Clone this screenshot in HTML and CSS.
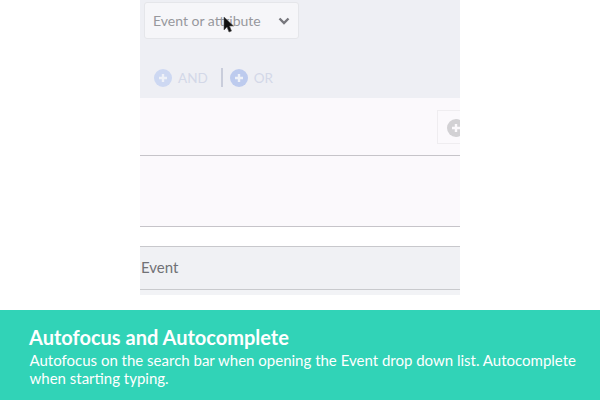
FILE: index.html
```html
<!DOCTYPE html>
<html lang="en">
<head>
    <meta charset="UTF-8">
    <meta name="viewport" content="width=device-width, initial-scale=1.0">
    <title>Autofocus and Autocomplete</title>
    <link rel="stylesheet" href="styles.css">
</head>
<body>
    <div class="stage">
        <div class="builder">
            <div class="filter-panel">
                <div class="select">
                    <span class="select-text">Event or attribute</span>
                    <svg class="chevron" width="12" height="8" viewBox="0 0 12 8"><path d="M1.500 1.500 L6 6 L10.500 1.500" fill="none" stroke="#77777d" stroke-width="2.400"/></svg>
                </div>
                <div class="logic-row">
                    <span class="logic-btn">
                        <svg class="plus" width="18" height="18" viewBox="0 0 18 18"><circle cx="9" cy="9" r="9" fill="#cdd8f2"/><path d="M9 5v8M5 9h8" stroke="#eef1f8" stroke-width="2.400"/></svg>
                        AND
                    </span>
                    <span class="logic-divider"></span>
                    <span class="logic-btn">
                        <svg class="plus" width="18" height="18" viewBox="0 0 18 18"><circle cx="9" cy="9" r="9" fill="#bdcbee"/><path d="M9 5v8M5 9h8" stroke="#eef1f8" stroke-width="2.400"/></svg>
                        OR
                    </span>
                </div>
            </div>
            <div class="row row-add">
                <div class="add-box">
                    <svg width="18" height="18" viewBox="0 0 18 18"><circle cx="9" cy="9" r="9" fill="#d2d1d4"/><path d="M9 5v8M5 9h8" stroke="#fbf9fc" stroke-width="2.400"/></svg>
                </div>
            </div>
            <div class="row row-empty"></div>
            <div class="row-gap"></div>
            <div class="row-event">Event</div>
            <div class="row-tail"></div>
        </div>
        <svg class="cursor" width="12" height="18" viewBox="0 0 12 18"><path d="M1 1v13l3-3 2 5 2.500-1-2-5h4z" fill="#111" stroke="#555" stroke-width="0.600"/></svg>
    </div>
    <div class="caption">
        <div class="caption-title">Autofocus and Autocomplete</div>
        <p class="caption-text">Autofocus on the search bar when opening the Event drop down list. Autocomplete when starting typing.</p>
    </div>
</body>
</html>
```
FILE: styles.css
```css
html, body {
    margin: 0;
    padding: 0;
}
body {
    width: 600px;
    height: 400px;
    overflow: hidden;
    background-color: white;
    font-family: Lato, "Open Sans", sans-serif;
    display: flex;
    flex-direction: column;
}
.stage {
    position: relative;
    height: 310px;
    flex-shrink: 0;
}
.builder {
    width: 320px;
    margin-left: 140px;
    overflow: hidden;
}
.filter-panel {
    height: 98px;
    box-sizing: border-box;
    padding: 2px 0 0 4px;
    background-color: #eeeff4;
}
.select {
    width: 155px;
    height: 37px;
    box-sizing: border-box;
    padding: 0 8px;
    display: flex;
    align-items: center;
    justify-content: space-between;
    background-color: #f6f6f9;
    border: 1px solid #e5e6ea;
    border-radius: 3px;
}
.select-text {
    font-size: 14px;
    color: #97989d;
}
.logic-row {
    margin-top: 29px;
    padding-left: 10px;
    display: flex;
    align-items: center;
    color: #d3d8e8;
    font-size: 13.500px;
}
.logic-btn {
    display: flex;
    align-items: center;
    gap: 6px;
}
.logic-divider {
    width: 2px;
    height: 19px;
    margin: 0 7px 0 13px;
    background-color: #c9cddb;
}
.row {
    background-color: #fbf9fc;
    border-bottom: 1px solid #c6c4c9;
}
.row-add {
    display: flex;
    justify-content: flex-end;
    padding-top: 12px;
    height: 45px;
}
.add-box {
    width: 23px;
    height: 34px;
    box-sizing: border-box;
    padding: 8px 0 0 9px;
    overflow: hidden;
    border: 1px solid #efedf0;
    border-right: none;
}
.row-empty {
    height: 70px;
}
.row-gap {
    height: 19px;
    background-color: white;
    border-bottom: 1px solid #c8c8cc;
}
.row-event {
    height: 42px;
    line-height: 41px;
    padding-left: 1px;
    font-size: 15px;
    color: #717276;
    background-color: #f0f1f4;
    border-bottom: 1px solid #c9cacd;
}
.row-tail {
    height: 5px;
    background-color: #f2f3f6;
}
.cursor {
    position: absolute;
    left: 223px;
    top: 16px;
}
.caption {
    flex: 1;
    box-sizing: border-box;
    padding: 15px 20px 0 29px;
    background-color: #31d3b7;
    color: white;
}
.caption-title {
    font-size: 20px;
    font-weight: 700;
    line-height: 24px;
}
.caption-text {
    margin: 2px 0 0 0.500px;
    font-size: 15px;
    line-height: 18px;
}
```
